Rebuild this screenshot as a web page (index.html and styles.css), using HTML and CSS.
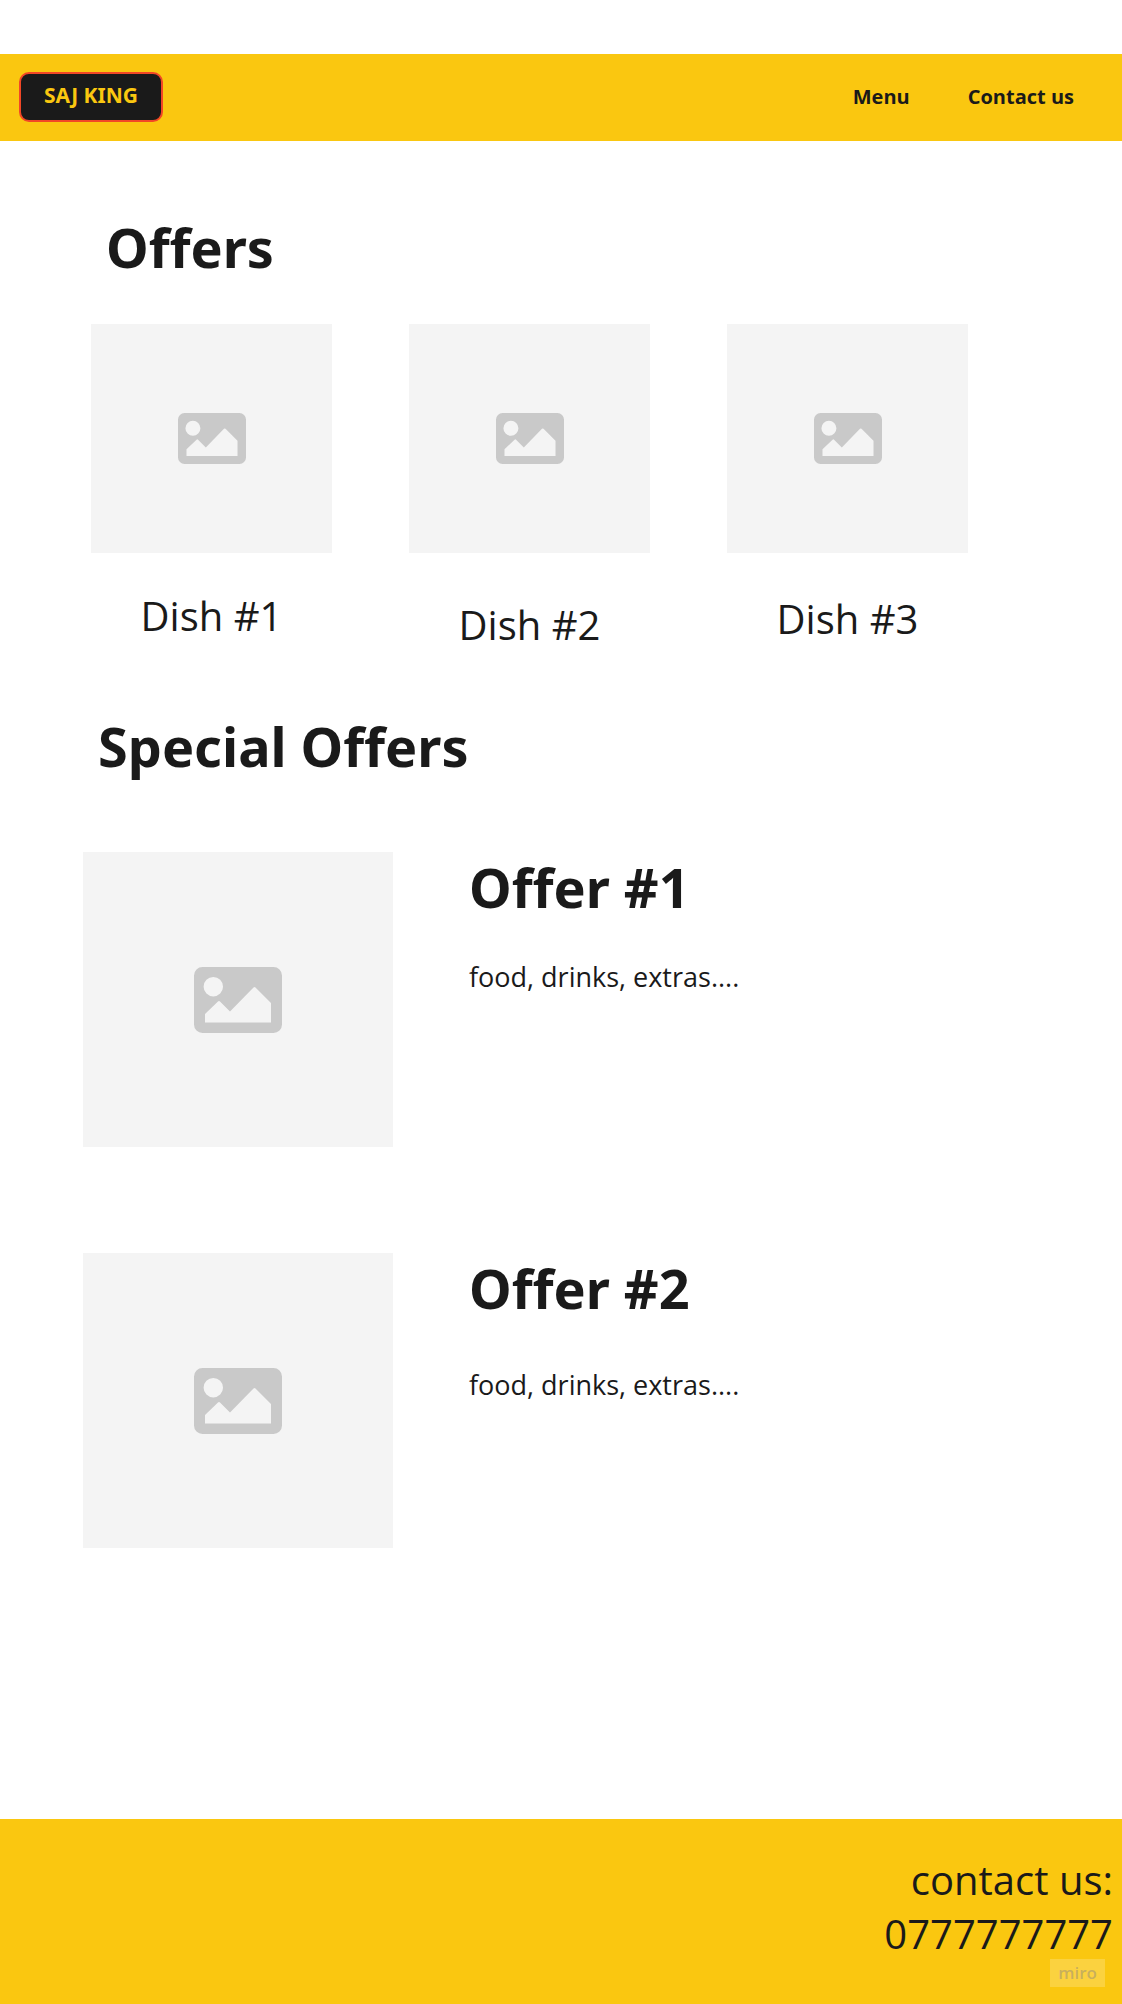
FILE: index.html
```html
<!DOCTYPE html>
<html lang="en">
<head>
<meta charset="utf-8">
<meta name="viewport" content="width=device-width, initial-scale=1">
<title>Saj King</title>
<link rel="stylesheet" href="styles.css">
</head>
<body>
<svg class="sprite" aria-hidden="true">
  <symbol id="picture" viewBox="0 0 88 66">
    <path fill="#c9c9c9" fill-rule="evenodd" d="M8.500 0H79.500A8.500 8.500 0 0 1 88 8.500V57.500A8.500 8.500 0 0 1 79.500 66H8.500A8.500 8.500 0 0 1 0 57.500V8.500A8.500 8.500 0 0 1 8.500 0ZM19.300 10A9.700 9.700 0 1 0 19.300 29.400A9.700 9.700 0 1 0 19.300 10ZM11 55.500H77V36L61.500 20.500Q60.500 19.600 59.500 20.500L36 44.500L26 34.500Q25 33.500 24 34.500L11 47Z"/>
  </symbol>
</svg>

<header class="site-header">
  <button class="brand" type="button">SAJ KING</button>
  <nav class="nav">
    <a href="#menu">Menu</a>
    <a href="#contact">Contact us</a>
  </nav>
</header>

<main class="content">
  <section class="dishes" id="menu">
    <h1 class="title">Offers</h1>
    <div class="dish-grid">
      <article class="dish">
        <div class="photo"><svg class="photo-icon"><use href="#picture"/></svg></div>
        <p class="dish-name">Dish #1</p>
      </article>
      <article class="dish dish-low">
        <div class="photo"><svg class="photo-icon"><use href="#picture"/></svg></div>
        <p class="dish-name">Dish #2</p>
      </article>
      <article class="dish dish-mid">
        <div class="photo"><svg class="photo-icon"><use href="#picture"/></svg></div>
        <p class="dish-name">Dish #3</p>
      </article>
    </div>
  </section>

  <section class="specials">
    <h1 class="title">Special Offers</h1>
    <article class="offer">
      <div class="photo photo-large"><svg class="photo-icon"><use href="#picture"/></svg></div>
      <div class="offer-text">
        <h2 class="offer-name">Offer #1</h2>
        <p class="offer-items">food, drinks, extras....</p>
      </div>
    </article>
    <article class="offer">
      <div class="photo photo-large"><svg class="photo-icon"><use href="#picture"/></svg></div>
      <div class="offer-text offer-text-loose">
        <h2 class="offer-name">Offer #2</h2>
        <p class="offer-items">food, drinks, extras....</p>
      </div>
    </article>
  </section>
</main>

<footer class="site-footer" id="contact">
  <p class="contact">contact us:<br>0777777777</p>
  <span class="watermark">miro</span>
</footer>
</body>
</html>
```
FILE: styles.css
```css
* {
  box-sizing: border-box;
}

body {
  display: flex;
  flex-direction: column;
  min-height: 100vh;
  margin: 0;
  padding-top: 54px;
  background: #fff;
  color: #1a1a1a;
  font-family: "Open Sans", "Noto Sans", sans-serif;
}

h1, h2, p {
  margin: 0;
}

.sprite {
  position: absolute;
  width: 0;
  height: 0;
}

.site-header {
  display: flex;
  align-items: center;
  justify-content: space-between;
  min-height: 87px;
  padding: 0 48px 2px 19px;
  background: #fac710;
}

.brand {
  height: 50px;
  padding: 0 23px 4px;
  border: 2px solid #f24726;
  border-radius: 10px;
  background: #1a1a1a;
  color: #fac710;
  font: bold 21px/28px "Noto Sans", "Open Sans", sans-serif;
}

.nav {
  display: flex;
  gap: 58px;
}

.nav a {
  color: inherit;
  font-size: 20px;
  font-weight: bold;
  line-height: 28px;
  text-decoration: none;
}

.content {
  flex: 1;
  padding-bottom: 64px;
}

.title,
.offer-name {
  font-family: "Noto Sans", "Open Sans", sans-serif;
  font-size: 54px;
  font-weight: bold;
  line-height: 60px;
}

.title {
  padding-left: 15px;
}

.dishes {
  padding: 76px 154px 0 91px;
}

.dish-grid {
  display: grid;
  grid-template-columns: repeat(3, 1fr);
  gap: 77px;
  margin-top: 47px;
}

.photo {
  display: flex;
  align-items: center;
  justify-content: center;
  aspect-ratio: 241 / 229;
  background: #f4f4f4;
}

.photo-icon {
  width: 68px;
  aspect-ratio: 4 / 3;
}

.photo-large {
  aspect-ratio: 310 / 295;
}

.photo-large .photo-icon {
  width: 88px;
}

.dish-name {
  margin-top: 36px;
  font-size: 40px;
  line-height: 54px;
  text-align: center;
}

.dish-mid .dish-name {
  margin-top: 39px;
}

.dish-low .dish-name {
  margin-top: 45px;
}

.specials {
  padding: 64px 83px 0;
}

.offer {
  display: grid;
  grid-template-columns: 310px 1fr;
  gap: 76px;
  align-items: start;
  margin-top: 76px;
}

.offer + .offer {
  margin-top: 106px;
}

.offer-text {
  display: flex;
  flex-direction: column;
  gap: 41px;
  padding-top: 5px;
}

.offer-text-loose {
  gap: 48px;
}

.offer-items {
  font-size: 27px;
  line-height: 38px;
}

.site-footer {
  position: relative;
  padding: 34px 9px 43px;
  background: #fac710;
}

.contact {
  font-size: 40px;
  line-height: 54px;
  text-align: right;
}

.watermark {
  position: absolute;
  right: 17px;
  bottom: 17px;
  padding: 0 8px;
  background: rgba(255, 255, 255, 0.2);
  color: rgba(120, 120, 140, 0.4);
  font-size: 17px;
  font-weight: 600;
  line-height: 28px;
}
```
